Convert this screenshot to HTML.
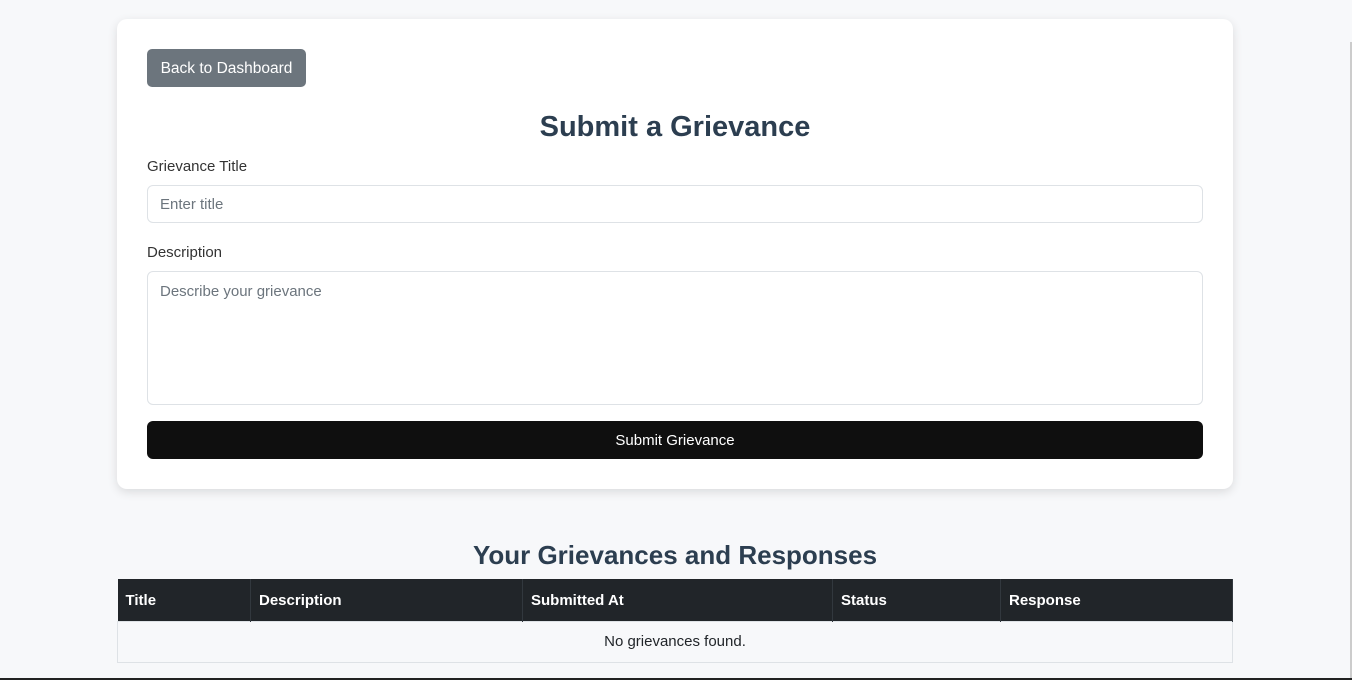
<!DOCTYPE html>
<html><head><style>
body{margin:0;width:1352px;height:680px;background:#f7f8fa;font-family:"Liberation Sans",sans-serif;position:relative;overflow:hidden;color:#2c3e50}
.card{position:absolute;left:117px;top:19px;width:1116px;height:470px;background:#fff;border-radius:10px;box-shadow:0 3px 10px rgba(0,0,0,.12)}
.abs{position:absolute}
.btn{left:30px;top:30px;width:159px;height:38px;background:#6c757d;border-radius:5px;color:#fff;font-size:15.5px;line-height:40px;text-align:center}
h1{position:absolute;left:0;right:0;top:92px;margin:0;text-align:center;font-size:29px;font-weight:600;color:#2c3e50}
.lbl{left:30px;font-size:15px;color:#333}
.inp{left:30px;width:1056px;border:1px solid #dee2e6;border-radius:6px;font-size:15px;color:#6c757d;padding-left:12px;box-sizing:border-box}
.sub{left:30px;top:402px;width:1056px;height:38px;background:#0f0f0f;border-radius:6px;color:#fff;font-size:15px;line-height:40px;text-align:center}
h2{position:absolute;left:117px;width:1116px;top:540px;margin:0;text-align:center;font-size:26px;font-weight:600;color:#2c3e50}
table{position:absolute;left:117px;top:579px;width:1116px;border-collapse:collapse;font-size:15px}
th{background:#212529;color:#fff;text-align:left;height:42px;padding:2px 8px 0;border-right:1px solid #32383e;font-weight:bold;box-sizing:border-box}
td{height:41px;padding:0;border:1px solid #dee2e6;text-align:center;background:#f7f8fa;color:#212529;box-sizing:border-box}
</style></head><body>
<div class="card">
<div class="abs btn">Back to Dashboard</div>
<h1>Submit a Grievance</h1>
<div class="abs lbl" style="top:139px">Grievance Title</div>
<div class="abs inp" style="top:166px;height:38px;line-height:38px">Enter title</div>
<div class="abs lbl" style="top:225px">Description</div>
<div class="abs inp" style="top:252px;height:134px;padding-top:11px">Describe your grievance</div>
<div class="abs sub">Submit Grievance</div>
</div>
<h2>Your Grievances and Responses</h2>
<table><tr><th style="width:133px">Title</th><th style="width:272px">Description</th><th style="width:310px">Submitted At</th><th style="width:168px">Status</th><th>Response</th></tr>
<tr><td colspan="5">No grievances found.</td></tr></table>
<div class="abs" style="left:1350px;top:42px;width:2px;height:638px;background:#ccc"></div>
<div class="abs" style="left:0;top:678px;width:1352px;height:2px;background:#222"></div>
</body></html>
